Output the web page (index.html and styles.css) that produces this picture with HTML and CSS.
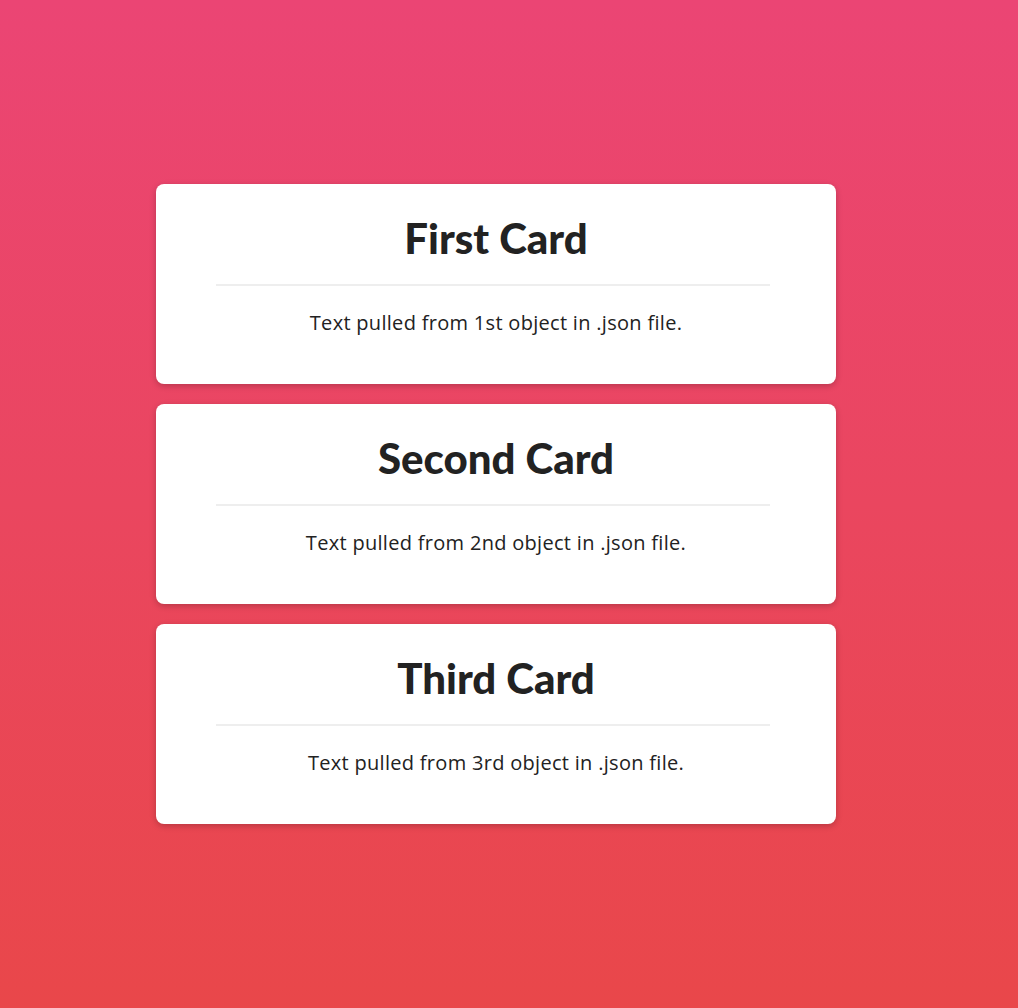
FILE: index.html
```html
<!DOCTYPE html>
<html lang="en">
<head>
<meta charset="utf-8">
<title>Cards</title>
<link rel="stylesheet" href="styles.css">
</head>
<body>
<main class="page">
  <div class="cards">
    <section class="card">
      <h2 class="card-title">First Card</h2>
      <hr class="card-rule">
      <p class="card-text">Text pulled from 1st object in .json file.</p>
    </section>
    <section class="card">
      <h2 class="card-title">Second Card</h2>
      <hr class="card-rule">
      <p class="card-text">Text pulled from 2nd object in .json file.</p>
    </section>
    <section class="card">
      <h2 class="card-title">Third Card</h2>
      <hr class="card-rule">
      <p class="card-text">Text pulled from 3rd object in .json file.</p>
    </section>
  </div>
</main>
</body>
</html>
```
FILE: styles.css
```css
html, body {
  margin: 0;
  padding: 0;
  height: 100%;
}
body {
  background: linear-gradient(to bottom, #eb4574 0%, #e9474a 100%);
  font-family: "Lato", "Open Sans", sans-serif;
  color: #222;
}
.page {
  min-height: 100%;
  box-sizing: border-box;
  display: flex;
  align-items: center;
  padding: 0 0 0 156px;
}
.cards {
  width: 680px;
  display: flex;
  flex-direction: column;
  gap: 20px;
}
.card {
  height: 200px;
  box-sizing: border-box;
  background: #fff;
  border-radius: 8px;
  box-shadow: 0 2px 6px rgba(0, 0, 0, 0.22);
  padding-top: 28px;
  text-align: center;
}
.card-title {
  margin: 0;
  font-family: "Lato", sans-serif;
  font-size: 42px;
  line-height: 52px;
  font-weight: 900;
  color: #222;
}
.card-rule {
  margin: 20px 66px 0 60px;
  border: 0;
  height: 2px;
  background: #eeeeee;
}
.card-text {
  margin: 23px 0 0;
  font-family: "Open Sans", sans-serif;
  font-size: 20px;
  letter-spacing: 0.3px;
  line-height: 28px;
  color: #222;
}
```
